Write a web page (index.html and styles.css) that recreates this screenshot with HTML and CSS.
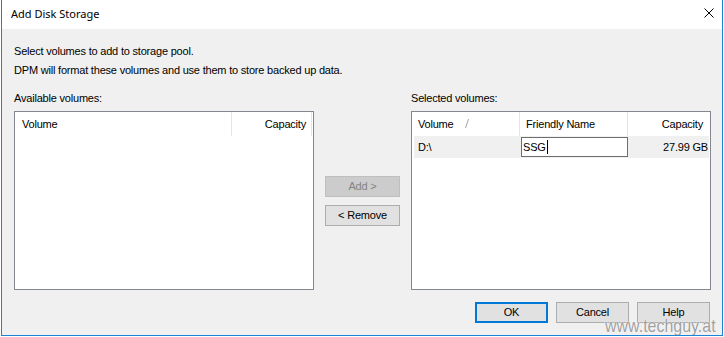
FILE: index.html
```html
<!DOCTYPE html>
<html>
<head>
<meta charset="utf-8">
<title>Add Disk Storage</title>
<link rel="stylesheet" href="styles.css">
</head>
<body>
<div class="window">
  <div class="titlebar">
    <span class="title">Add Disk Storage</span>
    <svg class="close" width="10" height="10" viewBox="0 0 10 10"><path d="M0.5 0.5 L9.5 9.5 M9.5 0.5 L0.5 9.5" stroke="#000" stroke-width="1" fill="none"/></svg>
  </div>
  <div class="content">
    <p class="intro first">Select volumes to add to storage pool.</p>
    <p class="intro">DPM will format these volumes and use them to store backed up data.</p>
    <div class="panes">
      <div class="label label-left">Available volumes:</div>
      <div class="label label-right">Selected volumes:</div>
      <div class="list list-left">
        <div class="head head-left">
          <div class="hcell pad7">Volume</div>
          <div class="hcell right pad5">Capacity</div>
        </div>
      </div>
      <div class="mid">
        <button class="btn disabled" disabled>Add &gt;</button>
        <button class="btn">&lt; Remove</button>
      </div>
      <div class="list list-right">
        <div class="head head-right">
          <div class="hcell pad6">Volume<svg class="sort" width="4" height="9" viewBox="0 0 4 9"><path d="M3.5 0 L0.5 9" stroke="#a6a6a6" stroke-width="1" fill="none"/></svg></div>
          <div class="hcell pad6">Friendly Name</div>
          <div class="hcell right pad7 noline">Capacity</div>
        </div>
        <div class="row">
          <div class="cell vol">D:\</div>
          <div class="cell fname"><div class="edit">SSG<span class="caret"></span></div></div>
          <div class="cell right cap">27.99 GB</div>
        </div>
      </div>
    </div>
    <div class="actions">
      <button class="btn default">OK</button>
      <button class="btn">Cancel</button>
      <button class="btn">Help</button>
    </div>
  </div>
  <div class="watermark">www.techguy.at</div>
</div>
</body>
</html>
```
FILE: styles.css
```css
* { box-sizing: border-box; }
html, body { margin: 0; padding: 0; background: #ffffff; }
body {
  font-family: "Liberation Sans", Arial, sans-serif;
  font-size: 11px;
  letter-spacing: -0.2px;
  color: #000;
  width: 724px;
  height: 337px;
  overflow: hidden;
}
.window {
  position: relative;
  margin-left: 1px;
  width: 722px;
  height: 336px;
  border: 1px solid #1883d7;
  border-top: none;
  display: flex;
  flex-direction: column;
  background: #f0f0f0;
  overflow: hidden;
}
.titlebar {
  height: 29px;
  flex: none;
  background: #ffffff;
  display: flex;
  align-items: center;
  justify-content: space-between;
  padding-left: 9px;
  padding-right: 8px;
}
.title {
  font-family: "Noto Sans", "Liberation Sans", sans-serif;
  font-size: 11px;
  letter-spacing: 0;
  line-height: 15px;
  margin-bottom: 2px;
}
.close { display: block; margin-bottom: 3px; }
.content {
  flex: 1;
  padding: 16px 11px 0 12px;
  display: flex;
  flex-direction: column;
}
.intro { margin: 0; line-height: 13px; height: 13px; }
.intro.first { margin-bottom: 6px; }
.panes {
  margin-top: 15px;
  display: grid;
  grid-template-columns: 300px 75px 300px;
  grid-template-rows: 13px 179px;
  column-gap: 11px;
  row-gap: 6px;
}
.label { line-height: 13px; }
.label-left { grid-column: 1; grid-row: 1; }
.label-right { grid-column: 3; grid-row: 1; }
.list {
  grid-row: 2;
  background: #ffffff;
  border: 1px solid #828790;
}
.list-left { grid-column: 1; }
.list-right { grid-column: 3; }
.mid {
  grid-column: 2;
  grid-row: 2;
  align-self: center;
  display: flex;
  flex-direction: column;
  gap: 8px;
}
.head { display: grid; height: 24px; }
.head-left { grid-template-columns: 217px 80px; }
.head-right { grid-template-columns: 108px 108px 1fr; }
.hcell {
  line-height: 24px;
  border-right: 1px solid #e5e5e5;
  white-space: nowrap;
}
.hcell.noline { border-right: none; }
.right { text-align: right; }
.pad7 { padding-left: 7px; }
.pad5 { padding-right: 5px; }
.pad6 { padding-left: 6px; }
.right.pad7 { padding-left: 0; padding-right: 7px; }
.sort { display: inline-block; margin-left: 11px; }
.row {
  display: grid;
  grid-template-columns: 106px 108px 1fr;
  height: 22px;
  margin: 0 1px 0 2px;
  background: #f0f0f0;
}
.cell { line-height: 22px; white-space: nowrap; }
.vol { padding-left: 4px; }
.cap { padding-right: 1px; }
.edit {
  margin: 1px 0 0 1px;
  width: 107px;
  height: 20px;
  border: 1px solid #6e6e6e;
  background: #ffffff;
  line-height: 18px;
  padding-left: 1px;
}
.caret {
  display: inline-block;
  width: 1px;
  height: 14px;
  background: #000;
  margin-left: 1px;
  vertical-align: -3px;
}
.btn {
  font-family: "Liberation Sans", Arial, sans-serif;
  font-size: 11px;
  letter-spacing: -0.2px;
  color: #000;
  width: 75px;
  height: 21px;
  padding: 0;
  margin: 0;
  background: #e1e1e1;
  border: 1px solid #adadad;
  border-radius: 0;
  line-height: 19px;
}
.btn.disabled {
  background: #cccccc;
  border-color: #bfbfbf;
  color: #838383;
}
.actions {
  margin-top: 12px;
  display: flex;
  justify-content: flex-end;
  gap: 8px;
  padding-right: 1px;
}
.actions .btn { width: 73px; }
.btn.default { border: 2px solid #0078d7; line-height: 17px; }
.watermark {
  position: absolute;
  left: 603px;
  top: 316px;
  font-family: "Liberation Sans", Arial, sans-serif;
  font-size: 19px;
  line-height: 19px;
  letter-spacing: 0;
  color: #a0a0a0;
  text-shadow: 0 0 1px #ffffff, 0 0 1px #ffffff;
  transform: scaleX(0.84);
  transform-origin: left top;
  white-space: nowrap;
}
```
